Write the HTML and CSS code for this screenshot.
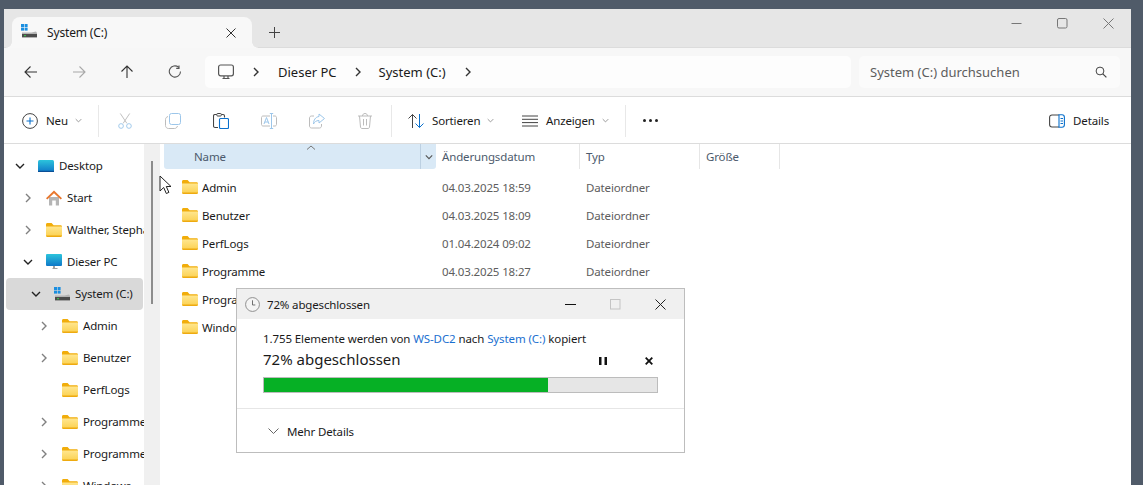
FILE: index.html
```html
<!DOCTYPE html>
<html lang="de">
<head>
    <meta charset="UTF-8">
    <title>System (C:) - Explorer</title>
    <link rel="stylesheet" href="styles.css">
</head>
<body>
    <svg class="defs" width="0" height="0">
        <defs>
            <linearGradient id="folderFront" x1="0" y1="0" x2="0" y2="1">
                <stop offset="0" stop-color="#ffe68e"/>
                <stop offset="1" stop-color="#fbd04e"/>
            </linearGradient>
            <linearGradient id="screenBlue" x1="0" y1="0" x2="0" y2="1">
                <stop offset="0" stop-color="#2cc4dc"/>
                <stop offset="1" stop-color="#0f78c8"/>
            </linearGradient>
            <symbol id="folder" viewBox="0 0 16 14">
                <path d="M0 1.5C0 .7.6 0 1.4 0h4.2l2 2.2h7c.8 0 1.4.6 1.4 1.4V6H0z" fill="#f1ad0b"/>
                <path d="M0 3.6h16v9c0 .8-.6 1.4-1.4 1.4H1.4C.6 14 0 13.4 0 12.6z" fill="url(#folderFront)"/>
                <path d="M0 12.6h16c0 .8-.6 1.4-1.4 1.4H1.4C.6 14 0 13.4 0 12.6z" fill="#eeaa10"/>
            </symbol>
            <symbol id="drive" viewBox="0 0 16 14">
                <rect x="0" y="0" width="3" height="3" fill="#1a8ee0"/>
                <rect x="3.6" y="0" width="3" height="3" fill="#1a8ee0"/>
                <rect x="0" y="3.6" width="3" height="3" fill="#1a8ee0"/>
                <rect x="3.6" y="3.6" width="3" height="3" fill="#1a8ee0"/>
                <path d="M1 8.6h9.5l4.5-1 1 1.5v1H1z" fill="#b4b4b4"/>
                <rect x="1" y="10" width="15" height="3.4" fill="#4c4c4c"/>
                <rect x="3" y="11.2" width="2" height="1" fill="#3bd14a"/>
            </symbol>
            <symbol id="chevR" viewBox="0 0 10 10">
                <path d="M3 1l4 4-4 4" fill="none" stroke="currentColor" stroke-width="1.4"/>
            </symbol>
            <symbol id="chevD" viewBox="0 0 10 10">
                <path d="M1 3l4 4 4-4" fill="none" stroke="currentColor" stroke-width="1.4"/>
            </symbol>
        </defs>
    </svg>

    <div class="window">
        <div class="titlebar">
            <div class="tab">
                <svg class="tab-icon"><use href="#drive"/></svg>
                <span class="tab-label">System (C:)</span>
                <svg class="tab-close" viewBox="0 0 10 10"><path d="M.5.5l9 9M9.500.5l-9 9" stroke="#333" fill="none"/></svg>
            </div>
            <svg class="tab-new" viewBox="0 0 11 11"><path d="M5.500 0v11M0 5.500h11" stroke="#444" fill="none"/></svg>
            <div class="win-controls">
                <svg viewBox="0 0 11 11"><path d="M.500 5.500h10" stroke="#777" fill="none"/></svg>
                <svg viewBox="0 0 11 11"><rect x=".5" y=".5" width="9.500" height="9.500" rx="1.500" stroke="#777" fill="none"/></svg>
                <svg viewBox="0 0 11 11"><path d="M.5.5l10 10M10.500.5l-10 10" stroke="#777" fill="none"/></svg>
            </div>
        </div>

        <div class="navbar">
            <div class="nav-btn">
                <svg viewBox="0 0 14 14"><path d="M13 7H1M6.500 1.500L1 7l5.500 5.500" stroke="#333" fill="none" stroke-width="1.100"/></svg>
            </div>
            <div class="nav-btn">
                <svg viewBox="0 0 14 14"><path d="M1 7h12M7.500 1.500L13 7l-5.500 5.500" stroke="#a8a8a8" fill="none" stroke-width="1.100"/></svg>
            </div>
            <div class="nav-btn">
                <svg viewBox="0 0 14 14"><path d="M7 13V1M1.500 6.500L7 1l5.500 5.500" stroke="#333" fill="none" stroke-width="1.100"/></svg>
            </div>
            <div class="nav-btn">
                <svg viewBox="0 0 14 14"><path d="M10.500 2.200A5.600 5.600 0 1 0 12.500 6.500M11 .6v2.800H8.200" stroke="#555" fill="none" stroke-width="1.100"/></svg>
            </div>
            <div class="address">
                <svg class="crumb-pc" viewBox="0 0 16 16"><rect x=".6" y="1" width="14.800" height="10.800" rx="2" stroke="#555" stroke-width="1.200" fill="none"/><path d="M4.500 14.500h7M6 12v2M10 12v2" stroke="#555" stroke-width="1.200" fill="none"/></svg>
                <svg class="crumb-chev first"><use href="#chevR"/></svg>
                <span class="crumb">Dieser PC</span>
                <svg class="crumb-chev"><use href="#chevR"/></svg>
                <span class="crumb">System (C:)</span>
                <svg class="crumb-chev last"><use href="#chevR"/></svg>
            </div>
            <div class="search">
                <span class="search-text">System (C:) durchsuchen</span>
                <svg viewBox="0 0 12 12"><circle cx="5" cy="5" r="3.900" stroke="#444" fill="none"/><path d="M7.800 7.800l3.600 3.600" stroke="#444" fill="none" stroke-width="1.200"/></svg>
            </div>
        </div>

        <div class="cmdbar">
            <div class="cmd cmd-new">
                <svg class="cmd-icon" viewBox="0 0 16 16"><circle cx="8" cy="8" r="7.400" stroke="#444" fill="none"/><path d="M8 4.500v7M4.500 8h7" stroke="#0a70cc" fill="none" stroke-width="1.100"/></svg>
                <span>Neu</span>
                <svg class="cmd-chev"><use href="#chevD"/></svg>
            </div>
            <div class="cmd-sep"></div>
            <div class="cmd-tool">
                <svg viewBox="0 0 16 17"><path d="M3 .5l7 10.500M13 .5L6 11" stroke="#bcbcbc" fill="none"/><circle cx="3.800" cy="13.800" r="2.500" stroke="#9cc6ea" fill="none"/><circle cx="12.200" cy="13.800" r="2.500" stroke="#9cc6ea" fill="none"/></svg>
            </div>
            <div class="cmd-tool">
                <svg viewBox="0 0 16 16"><rect x="4.500" y=".5" width="11" height="11" rx="2" stroke="#9cc6ea" fill="none"/><path d="M3 3.500C1.500 4 .5 5 .5 6.500v6c0 1.700 1.300 3 3 3h6c1.500 0 2.500-1 3-2.500" stroke="#bcbcbc" fill="none"/></svg>
            </div>
            <div class="cmd-tool">
                <svg viewBox="0 0 16 16"><path d="M5 14.500H2c-.8 0-1.500-.7-1.500-1.500V3c0-.8.700-1.500 1.500-1.500h8c.8 0 1.500.7 1.500 1.500v1.500" stroke="#444" fill="none" stroke-width="1.100"/><rect x="3.800" y=".5" width="4.500" height="2.500" rx=".8" fill="#fff" stroke="#444"/><rect x="6.500" y="5.500" width="9" height="10" rx="1" fill="#fff" stroke="#0a70cc" stroke-width="1.100"/></svg>
            </div>
            <div class="cmd-tool">
                <svg viewBox="0 0 16 16"><path d="M9 3H2C1.200 3 .5 3.700.5 4.500v7c0 .8.700 1.500 1.500 1.500h7M12 3h2c.8 0 1.500.7 1.500 1.500v7c0 .8-.7 1.500-1.500 1.500h-2" stroke="#bcbcbc" fill="none"/><path d="M10.500.5v15M8.800.5h3.400M8.800 15.500h3.400" stroke="#9cc6ea" fill="none"/><path d="M3 11l2.500-6.500L8 11M3.800 9h3.400" stroke="#9cc6ea" fill="none"/></svg>
            </div>
            <div class="cmd-tool">
                <svg viewBox="0 0 16 16"><path d="M5 3H2.500C1.400 3 .5 3.900.5 5v8c0 1.100.9 2 2 2h8c1.100 0 2-.9 2-2v-2" stroke="#bcbcbc" fill="none"/><path d="M10 1l5.500 4.500L10 10V7.500C7 7.500 5.500 9 4.500 11c0-4 2-7 5.500-7.500z" stroke="#9cc6ea" fill="none"/></svg>
            </div>
            <div class="cmd-tool">
                <svg viewBox="0 0 16 16"><path d="M1 3h14M5.500 3c0-1.500 1-2.500 2.500-2.500s2.500 1 2.500 2.500M2.500 3l1 11c.1.900.7 1.500 1.500 1.500h6c.8 0 1.400-.6 1.500-1.500l1-11M6.500 6v6.500M9.500 6v6.500" stroke="#bcbcbc" fill="none"/></svg>
            </div>
            <div class="cmd-sep sep-right"></div>
            <div class="cmd cmd-sort">
                <svg class="cmd-icon" viewBox="0 0 16 16"><path d="M4.500 15V1.500M.5 5.500l4-4 4 4" stroke="#444" fill="none"/><path d="M11.500 1v13.500M7.500 10.500l4 4 4-4" stroke="#0a70cc" fill="none"/></svg>
                <span>Sortieren</span>
                <svg class="cmd-chev"><use href="#chevD"/></svg>
            </div>
            <div class="cmd cmd-view">
                <svg class="cmd-icon" viewBox="0 0 16 16"><path d="M0 3h16M0 6.300h16M0 9.600h16M0 13h16" stroke="#444" fill="none"/></svg>
                <span>Anzeigen</span>
                <svg class="cmd-chev"><use href="#chevD"/></svg>
            </div>
            <div class="cmd-sep sep-more"></div>
            <div class="cmd-more"><i></i><i></i><i></i></div>
            <div class="cmd cmd-details">
                <svg class="cmd-icon" viewBox="0 0 16 14"><path d="M10 1H3C1.600 1 .6 2 .6 3.400v7.200C.6 12 1.600 13 3 13h7" stroke="#444" fill="none" stroke-width="1.100"/><path d="M10 .8h3c1.300 0 2.400 1.100 2.400 2.400v7.600c0 1.300-1.100 2.400-2.400 2.400h-3z" stroke="#0a70cc" fill="none" stroke-width="1.100"/><path d="M11.500 4.500h2.500M11.500 7h2.500M11.500 9.500h2.500" stroke="#0a70cc" fill="none"/></svg>
                <span>Details</span>
            </div>
        </div>

        <div class="content">
            <nav class="tree">
                <div class="node lvl0"><svg class="twist open"><use href="#chevD"/></svg>
                    <svg class="node-icon" viewBox="0 0 16 14"><rect x="0" y="1" width="16" height="12" rx="1.500" fill="url(#screenBlue)"/><rect x="0" y="11.800" width="16" height="1.200" fill="#0a4f96"/></svg>
                    <span>Desktop</span></div>
                <div class="node lvl1"><svg class="twist"><use href="#chevR"/></svg>
                    <svg class="node-icon tall" viewBox="0 0 16 16"><path d="M3 7h10v8.500H9.800v-5H6.200v5H3z" fill="#b5b5b5"/><path d="M0 8.200L8 .6l8 7.600-1.300 1.200L8 3.200 1.300 9.400z" fill="#e8772e"/></svg>
                    <span>Start</span></div>
                <div class="node lvl1"><svg class="twist"><use href="#chevR"/></svg>
                    <svg class="node-icon"><use href="#folder"/></svg>
                    <span>Walther, Stephan</span></div>
                <div class="node lvl1"><svg class="twist open"><use href="#chevD"/></svg>
                    <svg class="node-icon tall" viewBox="0 0 16 16"><rect x="0" y="0" width="16" height="12" rx="1" fill="url(#screenBlue)"/><path d="M7 12h2v2h2.500v1h-5v-1H7z" fill="#a0a0a0"/></svg>
                    <span>Dieser PC</span></div>
                <div class="node lvl2 selected"><svg class="twist open"><use href="#chevD"/></svg>
                    <svg class="node-icon"><use href="#drive"/></svg>
                    <span>System (C:)</span></div>
                <div class="node lvl3"><svg class="twist"><use href="#chevR"/></svg>
                    <svg class="node-icon"><use href="#folder"/></svg>
                    <span>Admin</span></div>
                <div class="node lvl3"><svg class="twist"><use href="#chevR"/></svg>
                    <svg class="node-icon"><use href="#folder"/></svg>
                    <span>Benutzer</span></div>
                <div class="node lvl3"><svg class="twist hidden"><use href="#chevR"/></svg>
                    <svg class="node-icon"><use href="#folder"/></svg>
                    <span>PerfLogs</span></div>
                <div class="node lvl3"><svg class="twist"><use href="#chevR"/></svg>
                    <svg class="node-icon"><use href="#folder"/></svg>
                    <span>Programme</span></div>
                <div class="node lvl3"><svg class="twist"><use href="#chevR"/></svg>
                    <svg class="node-icon"><use href="#folder"/></svg>
                    <span>Programme (x86)</span></div>
                <div class="node lvl3"><svg class="twist"><use href="#chevR"/></svg>
                    <svg class="node-icon"><use href="#folder"/></svg>
                    <span>Windows</span></div>
            </nav>
            <div class="tree-scroll"><div class="thumb"></div></div>

            <main class="files">
                <div class="file-head">
                    <div class="col col-name"><span>Name</span><svg class="sort-caret" viewBox="0 0 10 5"><path d="M1 4.500L5 1l4 3.500" stroke="#777" fill="none"/></svg><div class="col-drop"><svg><use href="#chevD"/></svg></div></div>
                    <div class="col">Änderungsdatum</div>
                    <div class="col">Typ</div>
                    <div class="col">Größe</div>
                </div>
                <div class="file-row"><div class="file-name"><svg><use href="#folder"/></svg>Admin</div><div class="file-meta">04.03.2025 18:59</div><div class="file-meta">Dateiordner</div></div>
                <div class="file-row"><div class="file-name"><svg><use href="#folder"/></svg>Benutzer</div><div class="file-meta">04.03.2025 18:09</div><div class="file-meta">Dateiordner</div></div>
                <div class="file-row"><div class="file-name"><svg><use href="#folder"/></svg>PerfLogs</div><div class="file-meta">01.04.2024 09:02</div><div class="file-meta">Dateiordner</div></div>
                <div class="file-row"><div class="file-name"><svg><use href="#folder"/></svg>Programme</div><div class="file-meta">04.03.2025 18:27</div><div class="file-meta">Dateiordner</div></div>
                <div class="file-row"><div class="file-name"><svg><use href="#folder"/></svg>Programme (x86)</div><div class="file-meta"></div><div class="file-meta"></div></div>
                <div class="file-row"><div class="file-name"><svg><use href="#folder"/></svg>Windows</div><div class="file-meta"></div><div class="file-meta"></div></div>
            </main>
        </div>

        <section class="copy-dialog">
            <header class="dlg-title">
                <svg class="dlg-clock" viewBox="0 0 16 16"><circle cx="8" cy="8" r="7.400" fill="#f4f4f4" stroke="#8a8a8a"/><path d="M8 3.500V8.500h3" stroke="#666" fill="none"/></svg>
                <span class="dlg-caption">72% abgeschlossen</span>
                <svg class="dlg-btn" viewBox="0 0 11 11"><path d="M0 5.500h11" stroke="#111" fill="none"/></svg>
                <svg class="dlg-btn" viewBox="0 0 11 11"><rect x=".5" y=".5" width="9.500" height="9.500" stroke="#c4c4c4" fill="none"/></svg>
                <svg class="dlg-btn" viewBox="0 0 11 11"><path d="M.5.5l10 10M10.500.5l-10 10" stroke="#222" fill="none"/></svg>
            </header>
            <div class="dlg-body">
                <p class="dlg-line">1.755 Elemente werden von <a>WS-DC2</a> nach <a>System (C:)</a> kopiert</p>
                <div class="dlg-status">
                    <span class="dlg-percent">72% abgeschlossen</span>
                    <svg class="dlg-pause" viewBox="0 0 8 8"><path d="M0 0h2.500v8H0zM5.500 0H8v8H5.500z" fill="#111"/></svg>
                    <svg class="dlg-stop" viewBox="0 0 8 8"><path d="M.7.700l6.600 6.600M7.300.700L.7 7.300" stroke="#111" stroke-width="1.800" fill="none"/></svg>
                </div>
                <div class="progress"><div class="progress-fill" style="width: 72.3%"></div></div>
            </div>
            <footer class="dlg-foot">
                <svg viewBox="0 0 11 6"><path d="M.5.500l5 5 5-5" stroke="#666" fill="none"/></svg>
                <span>Mehr Details</span>
            </footer>
        </section>

        <svg class="cursor" viewBox="0 0 14 20"><path d="M1 1v15l3.700-3.500 2.600 6 2.600-1.100-2.600-5.900H12z" fill="#fff" stroke="#222"/></svg>
    </div>
</body>
</html>
```

FILE: styles.css
```css
:root {
    --desk-color: #505b69;
    --line-color: #dcdcdc;
    --text-color: #1a1a1a;
    --meta-color: #5d5d5d;
    --link-color: #1a6fd0;
}

* {
    margin: 0;
    padding: 0;
    box-sizing: border-box;
}

body {
    height: 100vh;
    padding: 9px 12px 0 4px;
    background-color: var(--desk-color);
    color: var(--text-color);
    font-family: "Noto Sans", sans-serif;
    font-size: 11.5px;
    letter-spacing: -0.15px;
    overflow: hidden;
}

svg {
    display: block;
    flex: none;
}

.defs {
    position: absolute;
}

.window {
    position: relative;
    display: flex;
    flex-direction: column;
    height: 476px;
    background-color: #fff;
    overflow: hidden;
}

/* title bar */
.titlebar {
    display: flex;
    align-items: flex-end;
    height: 39px;
    padding-left: 8px;
    background-color: #e6e6e6;
    border-bottom: 1px solid var(--line-color);
}

.tab {
    position: relative;
    display: flex;
    align-items: center;
    width: 240px;
    height: 31px;
    margin-bottom: -1px;
    padding-left: 9px;
    background-color: #f8f8f8;
    border-radius: 8px 8px 0 0;
}

.tab::before,
.tab::after {
    content: "";
    position: absolute;
    bottom: 0;
    width: 6px;
    height: 6px;
}

.tab::before {
    left: -6px;
    background: radial-gradient(circle at 0 0, #e6e6e6 5.500px, #f8f8f8 6px);
}

.tab::after {
    right: -6px;
    background: radial-gradient(circle at 100% 0, #e6e6e6 5.500px, #f8f8f8 6px);
}

.tab-icon {
    width: 16px;
    height: 14px;
    margin-top: -3px;
}

.tab-label {
    margin-left: 10px;
    width: 179px;
    font-size: 12px;
}

.tab-close {
    width: 10px;
    height: 10px;
}

.tab-new {
    width: 11px;
    height: 11px;
    margin: 0 0 9px 17px;
}

.win-controls {
    display: flex;
    gap: 35px;
    margin: 0 17px 18px auto;
}

.win-controls svg {
    width: 11px;
    height: 11px;
}

/* nav bar */
.navbar {
    display: flex;
    align-items: center;
    height: 49px;
    padding: 0 11px 0 3px;
    background-color: #f7f7f7;
    border-bottom: 1px solid var(--line-color);
}

.nav-btn {
    display: flex;
    justify-content: center;
    width: 48px;
}

.nav-btn svg {
    width: 14px;
    height: 14px;
}

.address {
    display: flex;
    align-items: center;
    width: 646px;
    height: 32px;
    margin-left: 6px;
    padding-left: 13px;
    background-color: #fdfdfd;
    border-radius: 5px;
    font-size: 13px;
    letter-spacing: 0;
}

.crumb-pc {
    width: 16px;
    height: 16px;
}

.crumb-chev {
    width: 10px;
    height: 10px;
    margin: 0 16px;
    color: #333;
}

.crumb-chev.first {
    margin: 0 17px;
}

.crumb-chev.last {
    margin-left: 17px;
}

.search {
    display: flex;
    align-items: center;
    justify-content: space-between;
    width: 261px;
    height: 32px;
    margin-left: 8px;
    padding: 0 13px 0 11px;
    background-color: #fbfbfb;
    border-radius: 5px;
    color: #5d5d5d;
    font-size: 13px;
    letter-spacing: 0;
}

.search svg {
    width: 12px;
    height: 12px;
}

/* command bar */
.cmdbar {
    display: flex;
    align-items: center;
    height: 47px;
    padding: 1px 0 0 18px;
    border-bottom: 1px solid var(--line-color);
}

.cmd {
    display: flex;
    align-items: center;
}

.cmd-icon {
    width: 16px;
    height: 16px;
    margin-right: 8px;
}

.cmd-chev {
    width: 7px;
    height: 7px;
    margin-left: 7px;
    color: #999;
}

.cmd-new {
    width: 76px;
}

.cmd-sep {
    width: 1px;
    height: 32px;
    margin-right: 2px;
    background-color: #e8e8e8;
}

.cmd-tool {
    display: flex;
    justify-content: center;
    width: 48px;
}

.cmd-tool svg {
    width: 16px;
    height: 16px;
}

.sep-right {
    margin: 0 16px 0 2px;
}

.cmd-sort {
    width: 114px;
}

.cmd-view {
    width: 103px;
}

.sep-more {
    margin: 0 17px 0 0;
}

.cmd-more {
    display: flex;
    gap: 3px;
}

.cmd-more i {
    width: 3px;
    height: 3px;
    border-radius: 50%;
    background-color: #222;
}

.cmd-details {
    margin-left: auto;
    padding-right: 22px;
}

.cmd-details .cmd-icon {
    height: 14px;
}

/* tree */
.content {
    display: flex;
    flex: 1;
    min-height: 0;
}

.tree {
    width: 140px;
    padding-top: 6px;
    overflow: hidden;
}

.node {
    display: flex;
    align-items: center;
    height: 32px;
    white-space: nowrap;
}

.node span {
    margin-top: -2px;
}

.lvl0 {
    padding-left: 12px;
}

.lvl1 {
    padding-left: 20px;
}

.lvl2 {
    padding-left: 28px;
}

.lvl3 {
    padding-left: 36px;
}

.node.selected {
    width: 137px;
    margin-left: 2px;
    padding-left: 26px;
    background-color: #d9d9d9;
    border-radius: 4px;
}

.twist {
    width: 10px;
    height: 10px;
    margin: 0 13px 0 -1px;
    color: #808080;
}

.twist.open {
    color: #222;
}

.twist.hidden {
    visibility: hidden;
}

.node-icon {
    width: 16px;
    height: 14px;
    margin-right: 5px;
}

.node-icon.tall {
    height: 16px;
}

.tree-scroll {
    width: 16px;
    padding: 17px 7px 0;
    background-color: #f0f0f0;
}

.thumb {
    width: 2px;
    height: 143px;
    background-color: #8c8c8c;
}

/* file list */
.files {
    flex: 1;
    padding-left: 4px;
}

.file-head {
    display: grid;
    grid-template-columns: 272px 144px 120px 80px;
    height: 25px;
    margin-bottom: 4px;
    color: #4c5a6c;
}

.col {
    display: flex;
    align-items: center;
    padding-left: 6px;
    border-right: 1px solid #e6e6e6;
}

.col-name {
    position: relative;
    padding-left: 30px;
    background-color: #d9e9f6;
    border-right: 0;
    border-radius: 0 0 3px 3px;
}

.sort-caret {
    position: absolute;
    top: 1px;
    left: 142px;
    width: 10px;
    height: 5px;
}

.col-drop {
    display: flex;
    align-items: center;
    justify-content: center;
    width: 16px;
    height: 100%;
    margin-left: auto;
    border-left: 1px solid #bcd0e2;
}

.col-drop svg {
    width: 8px;
    height: 8px;
    color: #555;
}

.file-row {
    display: grid;
    grid-template-columns: 272px 144px 120px;
    height: 28px;
    align-items: center;
}

.file-name {
    display: flex;
    align-items: center;
    padding-left: 18px;
}

.file-name svg {
    width: 16px;
    height: 14px;
    margin-right: 4px;
}

.file-meta {
    padding-left: 6px;
    color: var(--meta-color);
}

/* copy dialog */
.copy-dialog {
    position: absolute;
    top: 279px;
    left: 232px;
    display: flex;
    flex-direction: column;
    width: 449px;
    height: 165px;
    background-color: #fff;
    border: 1px solid #bdbdbd;
}

.dlg-title {
    display: flex;
    align-items: center;
    gap: 34px;
    height: 30px;
    padding: 0 18px 0 8px;
    background-color: #f0f0f0;
}

.dlg-clock {
    width: 15px;
    height: 15px;
    margin-right: -27px;
}

.dlg-caption {
    flex: 1;
}

.dlg-btn {
    width: 11px;
    height: 11px;
}

.dlg-body {
    flex: 1;
    padding: 12px 26px 0;
    border-bottom: 1px solid #e6e6e6;
}

.dlg-line {
    letter-spacing: -0.1px;
}

.dlg-line a {
    color: var(--link-color);
}

.dlg-status {
    display: flex;
    align-items: center;
    height: 24px;
    margin-top: 1px;
}

.dlg-percent {
    width: 336px;
    font-size: 15px;
    letter-spacing: 0;
}

.dlg-pause {
    width: 8px;
    height: 8px;
    margin-top: 3px;
}

.dlg-stop {
    width: 8px;
    height: 8px;
    margin: 3px 0 0 38px;
}

.progress {
    height: 16px;
    margin-top: 6px;
    background-color: #e6e6e6;
    border: 1px solid #bcbcbc;
}

.progress-fill {
    height: 100%;
    background-color: #06b025;
}

.dlg-foot {
    display: flex;
    align-items: center;
    height: 43px;
    padding: 1px 0 0 31px;
}

.dlg-foot svg {
    width: 11px;
    height: 6px;
    margin-right: 8px;
}

.cursor {
    position: absolute;
    top: 166px;
    left: 155px;
    width: 14px;
    height: 20px;
}
```
